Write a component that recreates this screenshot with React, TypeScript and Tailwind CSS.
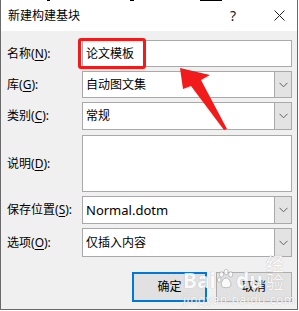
import React from "react";

const Chevron = () => (
  <svg width="9" height="6" viewBox="0 0 9 6" fill="none">
    <path d="M0.5 0.8 L4.5 4.8 L8.5 0.8" stroke="#606060" strokeWidth="1" />
  </svg>
);

const Label = ({ text, k, rest }: { text: string; k: string; rest?: string }) => (
  <div className="w-[75px] shrink-0 text-[12px] leading-none text-black">
    {text}(<span className="underline underline-offset-2">{k}</span>){rest ?? ":"}
  </div>
);

const Combo = ({ value, h = "h-[27px]", latin = false }: { value: string; h?: string; latin?: boolean }) => (
  <div className={`flex w-[210px] ${h} border border-[#a9a9a9] bg-white`}>
    <div className={`flex flex-1 items-center pl-[3px] ${latin ? "text-[13px]" : "text-[12px]"} leading-none text-black`}>
      {value}
    </div>
    <div className="flex w-[17px] items-center justify-center border-l border-[#a9a9a9] bg-[#e3e3e3]">
      <Chevron />
    </div>
  </div>
);

export default function App() {
  return (
    <div className="relative h-[311px] w-[299px] overflow-hidden bg-white font-['Noto_Sans','Noto_Sans_CJK_SC',sans-serif]">
      <div className="flex h-[310px] w-[298px] flex-col border-x border-b border-[#6a6a6a] bg-[#f0f0f0]">
        {/* title bar */}
        <div className="flex h-[31px] items-center bg-white pl-[7px] pr-[12px]">
          <div className="flex-1 text-[12px] leading-none text-black">新建构建基块</div>
          <div className="mr-[38px] text-[14px] leading-none text-[#222]">?</div>
          <svg width="11" height="11" viewBox="0 0 11 11">
            <path d="M0.5 0.5 L10.5 10.5 M10.5 0.5 L0.5 10.5" stroke="#222" strokeWidth="1" />
          </svg>
        </div>
        {/* body */}
        <div className="flex flex-col pl-[6px] pr-[5px] pt-[9px]">
          <div className="flex items-center">
            <Label text="名称" k="N" />
            <div className="flex h-[27px] w-[210px] items-center border border-[#a9a9a9] bg-white pl-[3px] text-[12px] leading-none text-black">
              论文模板
            </div>
          </div>
          <div className="mt-[4px] flex items-center">
            <Label text="库" k="G" />
            <Combo value="自动图文集" />
          </div>
          <div className="mt-[4px] flex items-center">
            <Label text="类别" k="C" />
            <Combo value="常规" h="h-[28px]" />
          </div>
          <div className="mt-[5px] flex items-center">
            <Label text="说明" k="D" />
            <div className="h-[57px] w-[210px] border border-[#a9a9a9] bg-white" />
          </div>
          <div className="mt-[4px] flex items-center">
            <Label text="保存位置" k="S" />
            <Combo value="Normal.dotm" h="h-[28px]" latin />
          </div>
          <div className="mt-[4px] flex items-center">
            <Label text="选项" k="O" />
            <Combo value="仅插入内容" h="h-[29px]" />
          </div>
          <div className="mt-[15px] flex justify-end gap-[9px]">
            <button className="flex h-[30px] w-[75px] items-center justify-center border-2 border-[#0078d7] bg-[#e1e1e1] text-[12px] leading-none text-black">
              确定
            </button>
            <button className="flex h-[30px] w-[76px] items-center justify-center border border-[#adadad] bg-[#e1e1e1] text-[12px] leading-none text-black">
              取消
            </button>
          </div>
        </div>
      </div>

      {/* fragments of text behind the window */}
      <div className="absolute left-[200px] top-0 h-[1px] w-[22px] bg-black" />
      <div className="absolute left-[47px] top-0 h-[1px] w-[3px] bg-black" />
      <div className="absolute left-[130px] top-0 h-[1px] w-[4px] bg-black" />

      {/* red highlight */}
      <div className="absolute left-[78px] top-[38px] h-[31px] w-[68px] rounded-[3px] border-[3px] border-[#f01c1c]" />

      {/* red arrow */}
      <svg className="absolute left-0 top-0" width="299" height="311" viewBox="0 0 299 311">
        <polygon points="180,68 210,75 201,80 227,129 224,130 191,86 183,89" fill="#f21b1b" />
      </svg>

      {/* watermark */}
      <div className="pointer-events-none absolute left-[183px] top-[255px] flex flex-col items-start opacity-80">
        <div className="flex items-end text-[21px] font-bold leading-none text-white [text-shadow:0_0_1px_#9a9a9a]">
          <span>Bai</span>
          <svg width="22" height="22" viewBox="0 0 22 22" className="mb-[1px]">
            <g fill="white" stroke="#a0a0a0" strokeWidth="0.8">
              <ellipse cx="6" cy="6" rx="2.3" ry="3" />
              <ellipse cx="11" cy="3.5" rx="2.3" ry="3" />
              <ellipse cx="16" cy="6" rx="2.3" ry="3" />
              <ellipse cx="3.5" cy="12" rx="2" ry="2.6" />
              <path d="M11 10 C7 10 5 16 6 19 C8 21 14 21 16 19 C17 16 15 10 11 10 Z" />
            </g>
          </svg>
          <span>du</span>
          <span className="ml-[3px] text-[18px] font-normal">经验</span>
        </div>
        <div className="mt-[3px] text-[12px] leading-none tracking-[0.5px] text-white [text-shadow:0_0_1px_#9a9a9a]">
          jingyan.baidu.com
        </div>
      </div>
    </div>
  );
}
